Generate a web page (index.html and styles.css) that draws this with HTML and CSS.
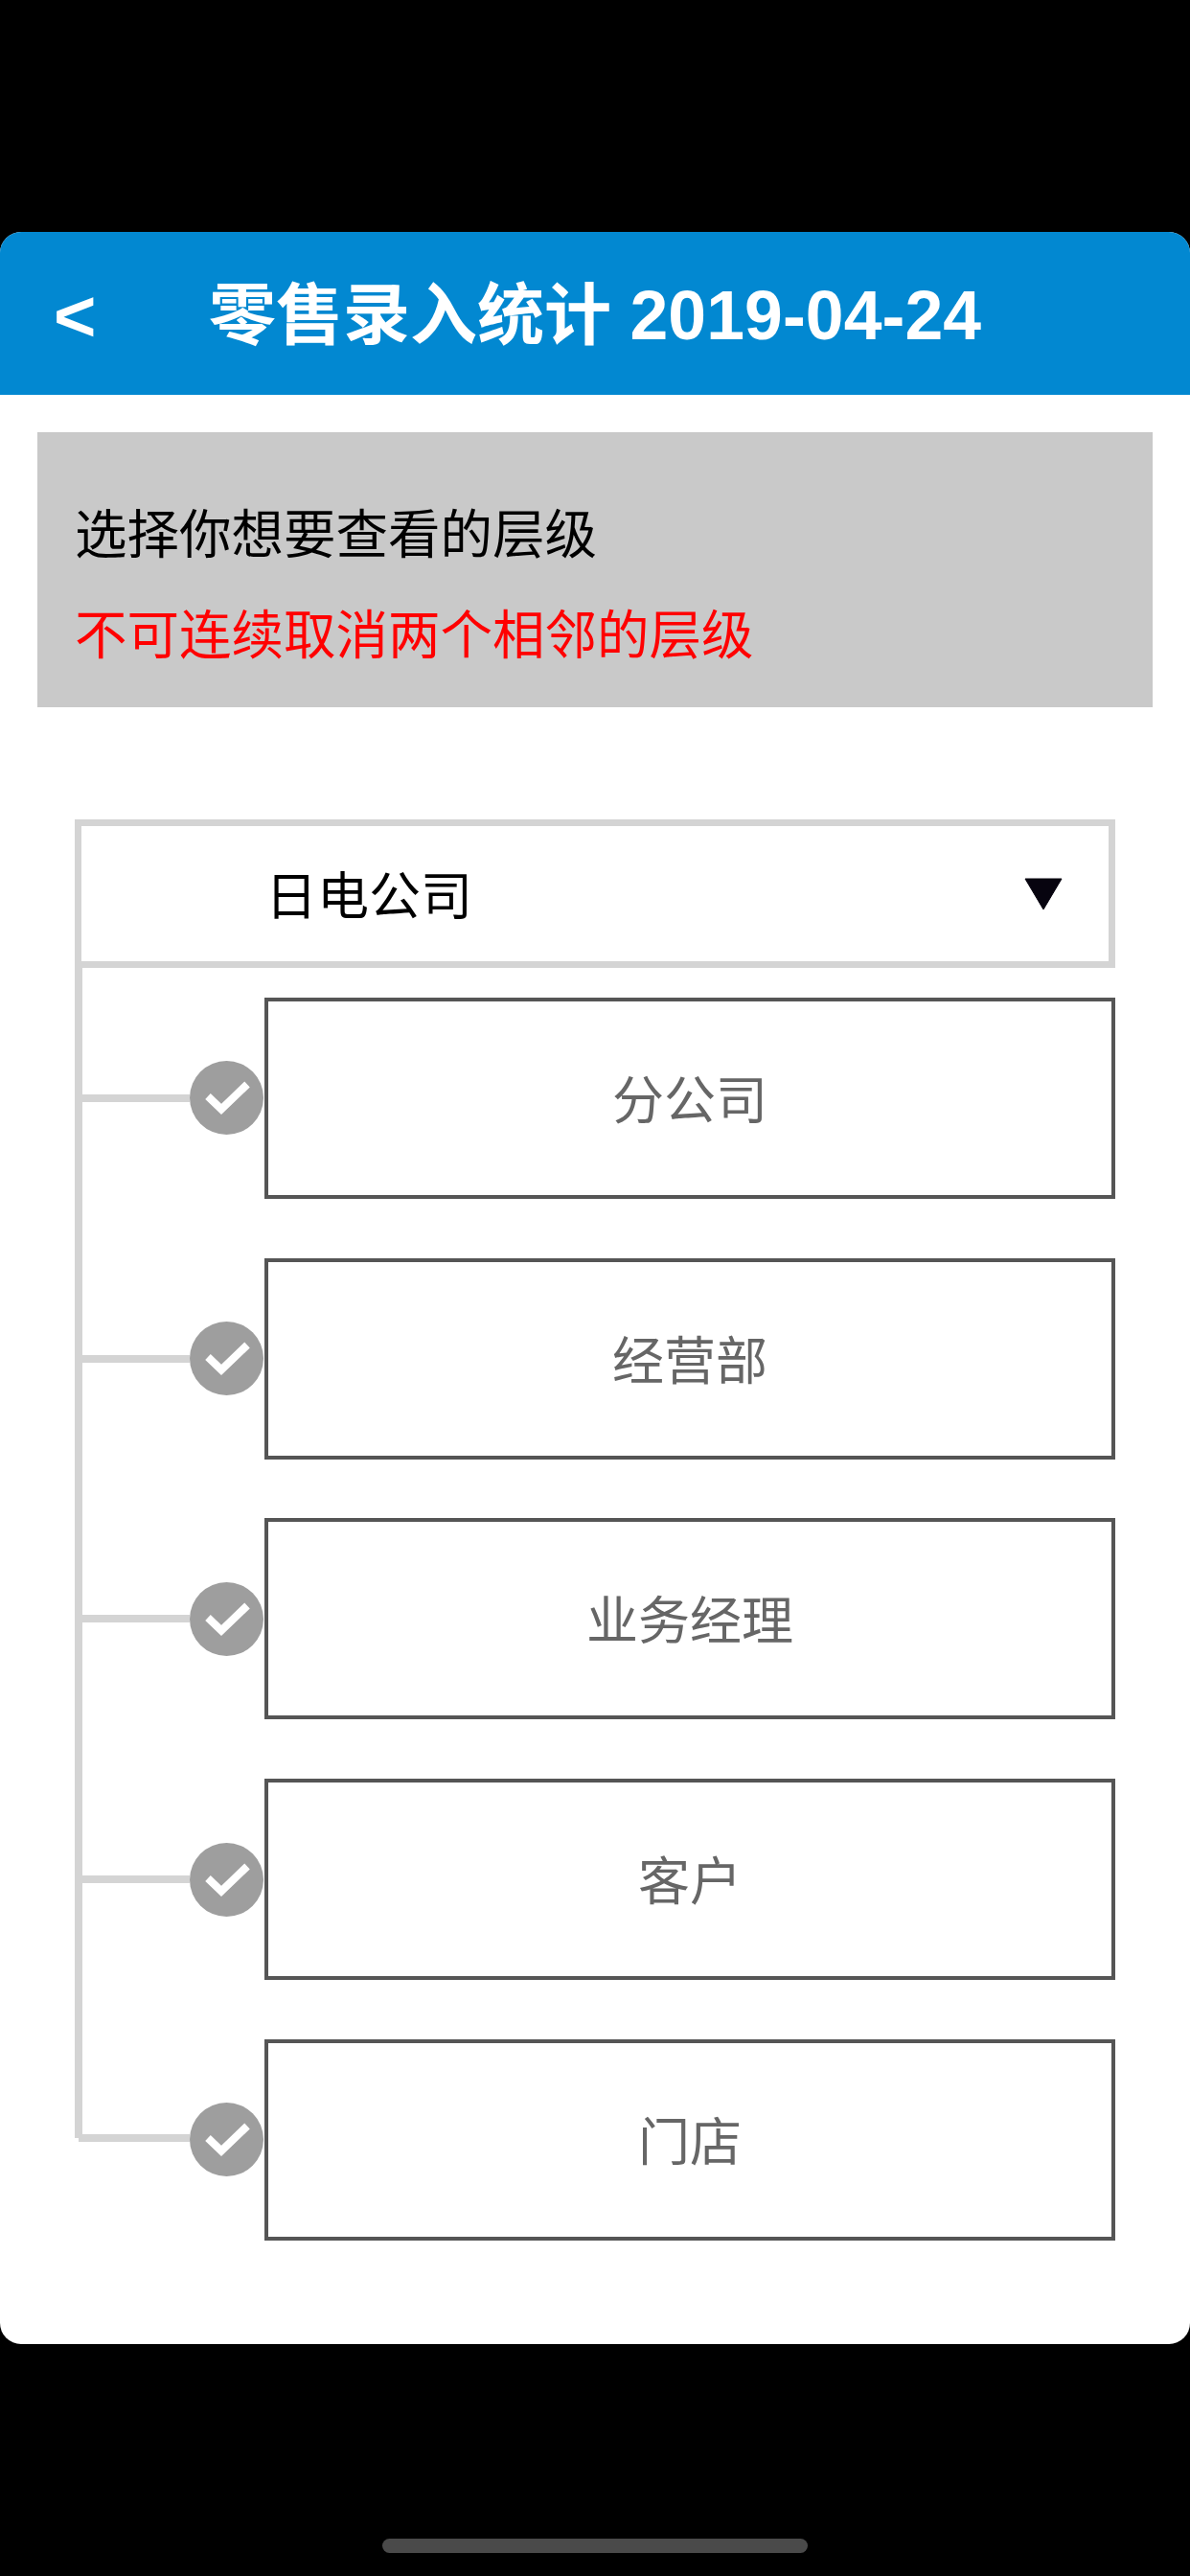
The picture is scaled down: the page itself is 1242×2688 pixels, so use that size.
FILE: index.html
```html
<!DOCTYPE html>
<html lang="zh-CN">
<head>
<meta charset="utf-8">
<title>零售录入统计</title>
<link rel="stylesheet" href="styles.css">
</head>
<body>
<main class="card">
  <header class="header">
    <span class="back">&lt;</span>
    <h1 class="title">零售录入统计 <span class="title-date">2019-04-24</span></h1>
  </header>
  <section class="notice">
    <p class="notice-line">选择你想要查看的层级</p>
    <p class="notice-line notice-warn">不可连续取消两个相邻的层级</p>
  </section>
  <section class="tree">
    <div class="root">
      <span class="root-label">日电公司</span>
      <svg class="caret" width="40" height="34" viewBox="0 0 40 34"><path d="M1 1H39L20 33Z" fill="#07040f" stroke="#07040f" stroke-width="1" stroke-linejoin="round"/></svg>
    </div>
    <div class="row">
      <div class="branch"><span class="spine"></span><span class="link"></span><span class="spine"></span></div>
      <svg class="check" width="77" height="77" viewBox="0 0 77 77"><circle cx="38.5" cy="38.5" r="38.5" fill="#9e9e9e"/><path d="M19 37L33 50.500L60 24.500" fill="none" stroke="#fff" stroke-width="8"/></svg>
      <div class="box">分公司</div>
    </div>
    <div class="row">
      <div class="branch"><span class="spine"></span><span class="link"></span><span class="spine"></span></div>
      <svg class="check" width="77" height="77" viewBox="0 0 77 77"><circle cx="38.5" cy="38.5" r="38.5" fill="#9e9e9e"/><path d="M19 37L33 50.500L60 24.500" fill="none" stroke="#fff" stroke-width="8"/></svg>
      <div class="box">经营部</div>
    </div>
    <div class="row">
      <div class="branch"><span class="spine"></span><span class="link"></span><span class="spine"></span></div>
      <svg class="check" width="77" height="77" viewBox="0 0 77 77"><circle cx="38.5" cy="38.5" r="38.5" fill="#9e9e9e"/><path d="M19 37L33 50.500L60 24.500" fill="none" stroke="#fff" stroke-width="8"/></svg>
      <div class="box">业务经理</div>
    </div>
    <div class="row">
      <div class="branch"><span class="spine"></span><span class="link"></span><span class="spine"></span></div>
      <svg class="check" width="77" height="77" viewBox="0 0 77 77"><circle cx="38.5" cy="38.5" r="38.5" fill="#9e9e9e"/><path d="M19 37L33 50.500L60 24.500" fill="none" stroke="#fff" stroke-width="8"/></svg>
      <div class="box">客户</div>
    </div>
    <div class="row row-last">
      <div class="branch"><span class="spine"></span><span class="link"></span><span class="spine"></span></div>
      <svg class="check" width="77" height="77" viewBox="0 0 77 77"><circle cx="38.5" cy="38.5" r="38.5" fill="#9e9e9e"/><path d="M19 37L33 50.500L60 24.500" fill="none" stroke="#fff" stroke-width="8"/></svg>
      <div class="box">门店</div>
    </div>
  </section>
</main>
<div class="home-wrap"><span class="home-bar"></span></div>
</body>
</html>
```
FILE: styles.css
```css
* { box-sizing: border-box; }
html, body { margin: 0; padding: 0; }
body {
  width: 1242px;
  height: 2688px;
  background: #000;
  padding-top: 242px;
  font-family: "Liberation Sans", "Noto Sans CJK SC", sans-serif;
  overflow: hidden;
}
.card {
  background: #fff;
  border-radius: 22px;
  overflow: hidden;
  height: 2204px;
}
.header {
  height: 170px;
  background: #0288d1;
  color: #fff;
  display: flex;
  align-items: center;
  padding: 6px 0 0 56px;
}
.back { width: 162px; font-size: 76px; font-weight: 700; line-height: 1; }
.title { margin: 0; font-size: 70px; font-weight: 600; line-height: 1; white-space: nowrap; }
.title-date { font-size: 71.5px; font-weight: 700; letter-spacing: 0.1px; }
.notice {
  margin: 39px 39px 0;
  height: 287px;
  background: #c9c9c9;
  padding: 50px 0 0 39px;
  font-size: 54.500px;
}
.notice-line { margin: 0; height: 105px; line-height: 105px; color: #000; font-weight: 400; font-family: "Noto Sans CJK SC", sans-serif; }
.notice-warn { color: #f00; }
.tree { margin: 117px 78px 0; }
.root {
  height: 155px;
  border: 7.5px solid #d4d4d4;
  display: flex;
  align-items: center;
  justify-content: space-between;
  padding: 0 48px 2px 192px;
  font-size: 54px;
  font-family: "Noto Sans CJK SC", sans-serif;
  font-weight: 400;
  color: #000;
}
.caret { display: block; margin-top: 2px; }
.row {
  display: flex;
  align-items: center;
  height: 271.75px;
}
.branch {
  width: 120px;
  align-self: stretch;
  display: flex;
  flex-direction: column;
}
.spine { flex: 1; width: 7.5px; background: #d4d4d4; }
.link { height: 8px; background: #d4d4d4; }
.row-last .spine:first-child { margin-bottom: -4px; }
.row-last .spine:last-child { visibility: hidden; }
.row-last .link { margin-left: 4px; }
.check { display: block; flex: none; }
.box {
  margin-left: 1px;
  width: 888px;
  height: 210px;
  border: 4px solid #555;
  display: flex;
  align-items: center;
  justify-content: center;
  padding-bottom: 3px;
  font-size: 54px;
  font-family: "Noto Sans CJK SC", sans-serif;
  font-weight: 400;
  color: #666;
}
.home-wrap {
  display: flex;
  justify-content: center;
  padding: 203px 0 0;
}
.home-bar { width: 444px; height: 15px; border-radius: 7.5px; background: #4a4a4a; }
```
